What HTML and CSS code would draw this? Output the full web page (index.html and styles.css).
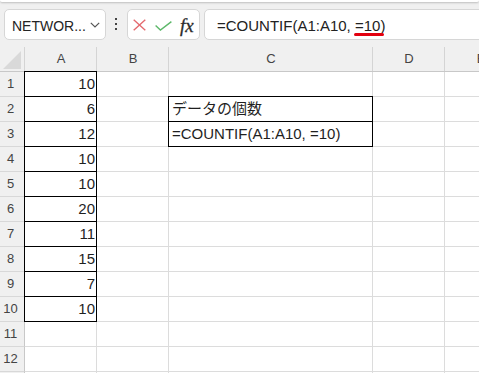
FILE: index.html
```html
<!DOCTYPE html>
<html lang="ja">
<head>
<meta charset="utf-8">
<title>COUNTIF</title>
<link rel="stylesheet" href="styles.css">
</head>
<body>
<div class="ribbon"></div>
<div class="toolbar">
  <div class="namebox">
    <span class="nb-label">NETWOR...</span>
    <svg class="chev" width="10" height="6" viewBox="0 0 10 6"><path d="M0.8 0.8 L5 5 L9.2 0.8" fill="none" stroke="#555" stroke-width="1.2"/></svg>
  </div>
  <div class="more"><i></i><i></i><i></i></div>
  <div class="btnbox">
    <svg class="ic-x" width="13" height="12" viewBox="0 0 13 12"><path d="M0.7 0.7 L12.3 11.3 M12.3 0.7 L0.7 11.3" fill="none" stroke="#e46a6f" stroke-width="1.4"/></svg>
    <svg class="ic-ok" width="17" height="10" viewBox="0 0 17 10"><path d="M0.6 4.6 L5.4 9 L16.4 0.6" fill="none" stroke="#5db86a" stroke-width="1.4"/></svg>
    <span class="ic-fx">fx</span>
  </div>
  <div class="formula">=COUNTIF(A1:A10, <span class="err">=10</span>)</div>
</div>
<div class="sheet">
  <div class="ch corner"><svg width="18" height="18" viewBox="0 0 18 18"><path d="M0 18 L18 18 L18 0 Z" fill="#d9d9d9"/></svg></div>
  <div class="ch">A</div><div class="ch">B</div><div class="ch">C</div><div class="ch">D</div><div class="ch">E</div>

  <div class="rh">1</div><div class="c num bx top">10</div><div class="c"></div><div class="c"></div><div class="c"></div><div class="c"></div>
  <div class="rh">2</div><div class="c num bx">6</div><div class="c"></div><div class="c bx top">データの個数</div><div class="c"></div><div class="c"></div>
  <div class="rh">3</div><div class="c num bx">12</div><div class="c"></div><div class="c bx">=COUNTIF(A1:A10, =10)</div><div class="c"></div><div class="c"></div>
  <div class="rh">4</div><div class="c num bx">10</div><div class="c"></div><div class="c"></div><div class="c"></div><div class="c"></div>
  <div class="rh">5</div><div class="c num bx">10</div><div class="c"></div><div class="c"></div><div class="c"></div><div class="c"></div>
  <div class="rh">6</div><div class="c num bx">20</div><div class="c"></div><div class="c"></div><div class="c"></div><div class="c"></div>
  <div class="rh">7</div><div class="c num bx">11</div><div class="c"></div><div class="c"></div><div class="c"></div><div class="c"></div>
  <div class="rh">8</div><div class="c num bx">15</div><div class="c"></div><div class="c"></div><div class="c"></div><div class="c"></div>
  <div class="rh">9</div><div class="c num bx">7</div><div class="c"></div><div class="c"></div><div class="c"></div><div class="c"></div>
  <div class="rh">10</div><div class="c num bx">10</div><div class="c"></div><div class="c"></div><div class="c"></div><div class="c"></div>
  <div class="rh">11</div><div class="c"></div><div class="c"></div><div class="c"></div><div class="c"></div><div class="c"></div>
  <div class="rh">12</div><div class="c"></div><div class="c"></div><div class="c"></div><div class="c"></div><div class="c"></div>
  <div class="rh"></div><div class="c"></div><div class="c"></div><div class="c"></div><div class="c"></div><div class="c"></div>
</div>
</body>
</html>
```
FILE: styles.css
```css
* { box-sizing: border-box; margin: 0; padding: 0; }
html, body { width: 479px; height: 373px; overflow: hidden; }
body {
  background: #f0f0f0;
  font-family: "Liberation Sans", Arial, "Noto Sans CJK JP", sans-serif;
  color: #222;
}
.ribbon {
  height: 2px;
  background: #fff;
  border-radius: 0 0 4px 4px;
  box-shadow: 0 1px 2px rgba(0, 0, 0, 0.22);
}
.toolbar {
  display: flex;
  height: 31px;
  margin-top: 7px;
  padding-left: 4px;
}
.namebox {
  width: 102px;
  flex-shrink: 0;
  background: #fff;
  border: 1px solid #d6d6d6;
  border-radius: 5px;
  display: flex;
  align-items: center;
  padding: 2px 0 0 7px;
  font-size: 14px;
  line-height: 16px;
  color: #242424;
}
.nb-label { flex: 1; white-space: nowrap; }
.chev { margin: 0 5px 2px 0; }
.more {
  width: 2px;
  flex-shrink: 0;
  margin: 0 10px 0 9px;
  display: flex;
  flex-direction: column;
  justify-content: center;
  gap: 3px;
  padding-bottom: 1px;
}
.more i { display: block; width: 2px; height: 2px; background: #444; }
.btnbox {
  width: 73px;
  flex-shrink: 0;
  background: #fff;
  border: 1px solid #d6d6d6;
  border-radius: 5px;
  display: flex;
  align-items: center;
  padding-left: 5px;
}
.ic-x { margin-top: 1px; }
.ic-ok { margin: 3px 0 0 9px; }
.ic-fx {
  margin-left: 8px;
  font-family: "Liberation Serif", "Times New Roman", serif;
  font-style: italic;
  font-size: 19px;
  line-height: 19px;
  color: #2b2b2b;
  -webkit-text-stroke: 0.3px #2b2b2b;
  margin-top: 1px;
}
.formula {
  width: 290px;
  flex-shrink: 0;
  margin-left: 4px;
  background: #fff;
  border: 1px solid #d6d6d6;
  border-radius: 5px;
  display: flex;
  align-items: center;
  padding: 1px 0 0 12px;
  font-size: 15px;
  line-height: 17px;
  white-space: pre;
  color: #222;
}
.err { position: relative; }
.err::after {
  content: "";
  position: absolute;
  left: -1px;
  right: -4px;
  bottom: -2px;
  height: 3px;
  background: #e3000f;
  border-radius: 2px;
}
.sheet {
  display: grid;
  grid-template-columns: 25px 72px 72px 204px 72px 72px;
  grid-template-rows: 32px;
  grid-auto-rows: 25px;
}
.ch {
  background: #f0f0f0 linear-gradient(#d4d4d4, #d4d4d4) right bottom / 1px 24px no-repeat;
  border-bottom: 1px solid #c8c8c8;
  padding-top: 7px;
  text-align: center;
  font-size: 13px;
  line-height: 24px;
  color: #444;
}
.corner { padding: 11px 0 0 3px; line-height: 0; text-align: left; }
.rh {
  background: #f0f0f0;
  border-right: 1px solid #c8c8c8;
  border-bottom: 1px solid #d8d8d8;
  display: flex;
  align-items: center;
  justify-content: center;
  padding-right: 3px;
  font-size: 13px;
  line-height: 24px;
  color: #444;
}
.c {
  background: #fff;
  border-right: 1px solid #dcdcdc;
  border-bottom: 1px solid #dcdcdc;
  display: flex;
  align-items: flex-end;
  padding: 0 2px 4px 3px;
  font-size: 15px;
  line-height: 17px;
  white-space: nowrap;
  color: #1f1f1f;
}
.num { justify-content: flex-end; padding-right: 1px; }
.bx {
  border-right-color: #000;
  border-bottom-color: #000;
  box-shadow: -1px 0 0 #000;
}
.bx.top { box-shadow: -1px 0 0 #000, 0 -1px 0 #000, -1px -1px 0 #000; }
```
